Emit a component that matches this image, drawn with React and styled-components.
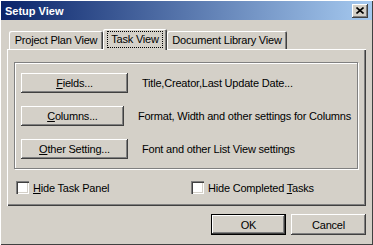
import React from "react";
import styled, { createGlobalStyle } from "styled-components";

const GlobalStyle = createGlobalStyle`
  html, body {
    margin: 0;
    padding: 0;
    background: #d4d0c8;
  }
  body {
    font-family: "Liberation Sans", Arial, sans-serif;
    font-size: 11px;
    letter-spacing: -0.2px;
    color: #000;
  }
`;

const bevel = `
  box-shadow: inset -1px -1px #404040, inset 1px 1px #fff,
    inset -2px -2px #808080;
`;

const Window = styled.div`
  width: 373px;
  height: 245px;
  box-sizing: border-box;
  padding: 1px;
  background: #d4d0c8;
  box-shadow: inset 1px 1px #fff, inset -1px -1px #404040;
  display: flex;
  flex-direction: column;
`;

const TitleBar = styled.div`
  height: 19px;
  display: flex;
  align-items: center;
  justify-content: space-between;
  padding: 0 4px;
  background: linear-gradient(to right, #0a246a, #a6caf0);
  color: #fff;
  font-weight: bold;
  font-size: 11px;
  letter-spacing: 0;
`;

const CloseButton = styled.div`
  width: 16px;
  height: 14px;
  background: #d4d0c8;
  display: flex;
  align-items: center;
  justify-content: center;
  ${bevel}
`;

const Body = styled.div`
  padding: 9px 6px 0 6px;
  display: flex;
  flex-direction: column;
`;

const TabStrip = styled.div`
  height: 20px;
  display: flex;
  align-items: flex-end;
  padding-left: 2px;
`;

const Tab = styled.div`
  width: ${(p) => p.$w}px;
  height: ${(p) => (p.$active ? 21 : 18)}px;
  margin-bottom: ${(p) => (p.$active ? -1 : 0)}px;
  position: relative;
  z-index: ${(p) => (p.$active ? 1 : 0)};
  box-sizing: border-box;
  background: #d4d0c8;
  border-radius: 2px 2px 0 0;
  box-shadow: inset 1px 1px #fff, inset -1px 0 #404040, inset -2px 0 #808080;
  display: flex;
  align-items: ${(p) => (p.$active ? "flex-start" : "center")};
  justify-content: center;
  padding-top: ${(p) => (p.$active ? 3 : 0)}px;
  white-space: nowrap;
`;

const FocusLabel = styled.span`
  outline: 1px dotted #000;
  outline-offset: 0;
  padding: 1px 3px 2px 3px;
`;

const Panel = styled.div`
  height: 157px;
  box-sizing: border-box;
  padding: 13px 8px 0 7px;
  box-shadow: inset 1px 1px #fff, inset -1px -1px #404040,
    inset -2px -2px #808080;
`;

const Group = styled.div`
  border: 1px solid #808080;
  box-shadow: inset 1px 1px #fff, 1px 1px #fff;
  padding: 10px 6px 9px 6px;
  display: flex;
  flex-direction: column;
  gap: 13px;
`;

const Row = styled.div`
  display: flex;
  align-items: center;
  gap: 14px;
`;

const PushButton = styled.div`
  width: ${(p) => p.$w}px;
  height: ${(p) => p.$h || 20}px;
  box-sizing: border-box;
  background: #d4d0c8;
  display: flex;
  align-items: center;
  justify-content: center;
  white-space: nowrap;
  ${bevel}
  ${(p) =>
    p.$default &&
    `box-shadow: inset 0 0 0 1px #000, inset -2px -2px #404040,
      inset 2px 2px #fff, inset -3px -3px #808080;`}
`;

const Description = styled.span`
  white-space: nowrap;
`;

const CheckRow = styled.div`
  display: grid;
  grid-template-columns: 175px 1fr;
  padding: 12px 0 0 2px;
`;

const Check = styled.label`
  display: flex;
  align-items: center;
  gap: 4px;
  white-space: nowrap;
`;

const CheckBox = styled.span`
  width: 13px;
  height: 13px;
  background: #fff;
  box-shadow: inset 1px 1px #808080, inset 2px 2px #404040,
    inset -1px -1px #fff, inset -2px -2px #d4d0c8;
`;

const Footer = styled.div`
  display: flex;
  justify-content: flex-end;
  gap: 5px;
  margin-top: 8px;
`;

const CloseGlyph = () => (
  <svg width="8" height="7" viewBox="0 0 8 7">
    <path d="M0.5 0.5 L7.5 6.5 M7.5 0.5 L0.5 6.5" stroke="#000" strokeWidth="1.6" />
  </svg>
);

export default function App() {
  return (
    <>
      <GlobalStyle />
      <Window>
        <TitleBar>
          <span>Setup View</span>
          <CloseButton>
            <CloseGlyph />
          </CloseButton>
        </TitleBar>
        <Body>
          <TabStrip>
            <Tab $w={94}>Project Plan View</Tab>
            <Tab $w={64} $active>
              <FocusLabel>Task View</FocusLabel>
            </Tab>
            <Tab $w={120}>Document Library View</Tab>
          </TabStrip>
          <Panel>
            <Group>
              <Row>
                <PushButton $w={107}>
                  <span>
                    <u>F</u>ields...
                  </span>
                </PushButton>
                <Description>Title,Creator,Last Update Date...</Description>
              </Row>
              <Row>
                <PushButton $w={107}>
                  <span>
                    <u>C</u>olumns...
                  </span>
                </PushButton>
                <Description>
                  Format, Width and other settings for Columns
                </Description>
              </Row>
              <Row>
                <PushButton $w={107}>
                  <span>
                    <u>O</u>ther Setting...
                  </span>
                </PushButton>
                <Description>Font and other List View settings</Description>
              </Row>
            </Group>
            <CheckRow>
              <Check>
                <CheckBox />
                <span>
                  <u>H</u>ide Task Panel
                </span>
              </Check>
              <Check>
                <CheckBox />
                <span>
                  Hide Completed <u>T</u>asks
                </span>
              </Check>
            </CheckRow>
          </Panel>
          <Footer>
            <PushButton $w={75} $h={21} $default>
              OK
            </PushButton>
            <PushButton $w={75} $h={21}>
              Cancel
            </PushButton>
          </Footer>
        </Body>
      </Window>
    </>
  );
}
